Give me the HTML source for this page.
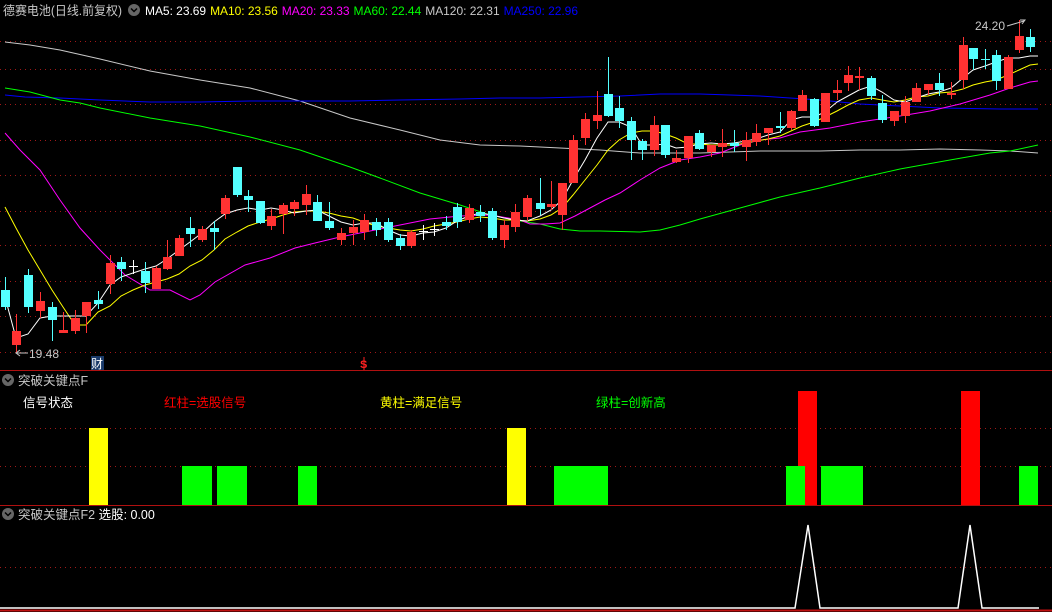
<!DOCTYPE html>
<html><head><meta charset="utf-8"><style>
html,body{margin:0;padding:0;background:#000;width:1052px;height:612px;overflow:hidden}
svg{display:block}
text{font-family:"Liberation Sans","Noto Sans CJK SC",sans-serif}
</style></head><body>
<svg id="s" width="1052" height="612" xmlns="http://www.w3.org/2000/svg">
<g stroke="#a01818" stroke-width="1" stroke-dasharray="1,4">
<line x1="0" y1="41.5" x2="1052" y2="41.5"/><line x1="0" y1="69.5" x2="1052" y2="69.5"/><line x1="0" y1="104.5" x2="1052" y2="104.5"/><line x1="0" y1="140.5" x2="1052" y2="140.5"/><line x1="0" y1="175.5" x2="1052" y2="175.5"/><line x1="0" y1="211.5" x2="1052" y2="211.5"/><line x1="0" y1="245.5" x2="1052" y2="245.5"/><line x1="0" y1="281.5" x2="1052" y2="281.5"/><line x1="0" y1="316.5" x2="1052" y2="316.5"/><line x1="0" y1="352.5" x2="1052" y2="352.5"/>
<line x1="0" y1="428.5" x2="1052" y2="428.5"/><line x1="0" y1="466.5" x2="1052" y2="466.5"/><line x1="0" y1="567.5" x2="1052" y2="567.5"/>
</g>
<line x1="0" y1="370.5" x2="1052" y2="370.5" stroke="#b01010"/>
<line x1="0" y1="505.5" x2="1052" y2="505.5" stroke="#b01010"/>
<line x1="0" y1="610.5" x2="1052" y2="610.5" stroke="#c01010" stroke-width="2"/>
<g id="ma" fill="none" stroke-width="1"></g>
<g id="cd"></g>
<rect x="89" y="428" width="19" height="77" fill="#ffff00"/>
<rect x="507" y="428" width="19" height="77" fill="#ffff00"/>
<g fill="#00ff00">
<rect x="182" y="466" width="30" height="39"/><rect x="217" y="466" width="30" height="39"/><rect x="298" y="466" width="19" height="39"/><rect x="554" y="466" width="54" height="39"/>
</g>
<rect x="798" y="391" width="19" height="114" fill="#ff0000"/>
<rect x="961" y="391" width="19" height="114" fill="#ff0000"/>
<g fill="#00ff00"><rect x="786" y="466" width="19" height="39"/><rect x="821" y="466" width="42" height="39"/><rect x="1019" y="466" width="19" height="39"/></g>
<polyline points="0,608 795,608 808,525 820,608 958,608 970,525 982,608 1039,608" fill="none" stroke="#fff" stroke-width="1.5"/>
<text x="3" y="15" fill="#c8c8c8" font-size="12.5" textLength="119" lengthAdjust="spacingAndGlyphs">德赛电池(日线.前复权)</text>
<circle cx="134" cy="10" r="6" fill="#666"/><path d="M131,8.5 L134,11.5 L137,8.5" stroke="#000" stroke-width="1.5" fill="none"/>
<text x="145" y="15" font-size="12" textLength="433" lengthAdjust="spacing"><tspan fill="#fff">MA5: 23.69</tspan><tspan fill="#ffff00" dx="4">MA10: 23.56</tspan><tspan fill="#ff00ff" dx="4">MA20: 23.33</tspan><tspan fill="#00ff00" dx="4">MA60: 22.44</tspan><tspan fill="#c8c8c8" dx="4">MA120: 22.31</tspan><tspan fill="#0000ff" dx="4">MA250: 22.96</tspan></text>
<text x="975" y="30" fill="#c8c8c8" font-size="12">24.20</text>
<path d="M1007,26 L1024,21 M1020,20 L1025,20 L1022,24" stroke="#c8c8c8" fill="none"/>
<text x="29" y="358" fill="#c8c8c8" font-size="12">19.48</text>
<path d="M16,353 H28 M20,350 L16,353 L20,356" stroke="#c8c8c8" fill="none"/>
<rect x="91" y="356" width="13" height="14" fill="#1a3a6a"/><text x="91" y="368" fill="#fff" font-size="12">财</text>
<text x="360" y="368" fill="#ff2020" font-size="11" font-weight="bold">S</text>
<line x1="364" y1="357" x2="364" y2="370" stroke="#ff2020"/>
<circle cx="8" cy="380" r="6" fill="#666"/><path d="M5,378.5 L8,381.5 L11,378.5" stroke="#000" stroke-width="1.5" fill="none"/>
<text x="18" y="385" fill="#c8c8c8" font-size="12.5">突破关键点F</text>
<text x="23" y="407" fill="#fff" font-size="12.5">信号状态</text>
<text x="164" y="407" fill="#ff0000" font-size="12.5">红柱=选股信号</text>
<text x="380" y="407" fill="#ffff00" font-size="12.5">黄柱=满足信号</text>
<text x="596" y="407" fill="#00ff00" font-size="12.5">绿柱=创新高</text>
<circle cx="8" cy="514" r="6" fill="#666"/><path d="M5,512.5 L8,515.5 L11,512.5" stroke="#000" stroke-width="1.5" fill="none"/>
<text x="18" y="519" fill="#c8c8c8" font-size="12.5">突破关键点F2 <tspan fill="#fff">选股: 0.00</tspan></text>
</svg>
<script>
var NS="http://www.w3.org/2000/svg";
function pl(pts,c){var p=document.createElementNS(NS,"polyline");p.setAttribute("points",pts);p.setAttribute("stroke",c);document.getElementById("ma").appendChild(p);}
pl("5,42 30,45 60,50 100,59 150,71 200,80 250,88 300,101 350,118 400,130 440,140 480,145 520,146 560,148 600,150 640,153 700,153 760,151 820,151 860,150 900,150 940,149 980,150 1010,151 1038,153","#c8c8c8");
pl("5,95 25,97 60,98 100,100 150,102 200,102 250,101 300,101 350,101 400,100 460,99 500,98 540,98 580,97 620,96 660,94 700,94 760,96 820,100 860,104 900,106 940,108 1000,109 1038,109","#0000ff");
pl("5,88 30,92 60,100 80,103 100,108 150,118 200,126 250,137 300,150 350,167 380,178 420,193 460,205 490,215 520,221 540,224 560,229 580,231 600,231 640,232 660,230 680,225 700,219 740,208 780,197 820,188 860,178 900,169 950,160 990,153 1010,151 1038,145","#00ff00");
pl("5,133 20,150 40,170 60,200 80,228 100,250 125,275 150,290 170,290 190,300 200,295 215,282 245,265 270,258 295,248 315,243 340,237 370,231 400,225 430,219 460,216 490,215 520,220 530,224 545,224 560,223 575,216 590,208 605,200 620,193 640,180 660,168 680,160 700,157 720,153 740,145 760,140 780,138 800,132 830,128 860,122 880,119 900,116 930,111 960,104 990,95 1010,88 1030,82 1038,81","#ff00ff");
pl("5,207 16,228 28,250 40,270 52,290 63,307 75,325 86,325 98,312 110,306 121,296 133,290 145,285 156,282 167,279 179,274 190,266 202,260 214,250 225,239 237,232 248,226 260,222 271,219 283,215 294,212 306,211 317,211 329,213 341,216 353,218 364,222 376,226 388,228 400,230 411,231 423,229 434,226 446,224 457,222 469,219 480,217 492,218 504,220 515,220 527,221 540,219 551,215 562,208 573,195 585,180 597,165 608,150 619,140 631,133 642,131 654,131 665,134 676,138 688,144 699,144 711,145 722,145 734,145 746,143 756,141 768,139 780,136 791,131 802,126 814,122 825,117 837,111 848,105 859,100 871,98 882,100 894,102 905,100 916,97 928,96 939,93 951,92 963,89 973,85 985,82 996,80 1008,75 1019,70 1030,65 1038,64","#ffff00");
pl("5,297 16,338 28,334 40,318 52,316 63,316 75,316 86,316 98,303 110,285 121,277 133,273 145,269 156,266 167,259 179,250 190,242 202,233 214,222 225,214 237,210 248,208 260,210 271,208 283,210 294,213 306,211 317,210 329,216 341,222 353,225 364,223 376,223 388,230 400,235 411,236 423,233 434,232 446,228 457,221 469,216 480,213 492,215 504,218 515,220 527,221 540,216 551,210 562,200 573,180 585,160 597,138 608,122 619,122 631,127 642,145 654,145 665,144 676,148 688,147 699,144 711,143 722,144 734,143 746,141 756,139 768,135 780,132 791,120 802,117 814,117 825,112 837,102 848,96 859,90 871,86 882,92 894,100 905,102 916,98 928,94 939,92 951,88 963,78 973,70 985,66 996,62 1008,58 1019,58 1030,56 1038,56","#ffffff");
var C=[["c",5,290,307,277,310],["r",16,331,345,314,352],["c",28,275,307,269,313],["r",40,301,311,292,318],["c",52,307,320,302,341],["r",63,330,333,312,333],["r",75,318,331,310,334],["r",86,302,316,302,333],["c",98,300,304,291,309],["r",110,263,284,255,294],["c",121,262,269,257,281],["w",133,266,267,260,274],["c",145,271,283,262,293],["r",156,268,289,266,289],["r",167,257,269,240,270],["r",179,238,256,235,256],["c",190,228,234,217,247],["r",202,229,240,226,242],["c",214,228,232,221,250],["r",225,198,214,195,219],["c",237,167,195,167,197],["c",248,196,200,190,212],["c",260,201,223,201,224],["r",271,216,226,209,230],["r",283,205,214,203,234],["r",294,202,209,200,216],["r",306,194,205,185,215],["c",317,202,221,195,221],["c",329,221,228,202,230],["r",341,233,240,228,245],["r",353,227,233,220,245],["r",364,220,232,214,240],["c",376,222,230,218,236],["c",388,222,240,218,242],["c",400,238,246,234,250],["r",411,232,246,230,248],["w",423,231,232,225,240],["w",434,229,230,223,236],["c",446,222,226,216,230],["c",457,207,222,203,228],["r",469,208,220,204,223],["c",480,212,216,205,222],["c",492,211,238,208,240],["r",504,225,240,220,248],["r",515,212,227,204,232],["r",527,198,217,195,221],["c",540,203,209,178,215],["r",551,204,207,181,210],["r",562,183,215,183,230],["r",573,140,183,135,183],["r",585,119,138,113,145],["r",597,115,121,91,129],["c",608,94,116,57,117],["c",619,108,121,96,128],["c",631,121,140,117,160],["c",642,141,150,139,160],["r",654,125,150,116,156],["c",665,125,155,125,158],["r",676,158,162,150,163],["r",688,136,158,136,163],["c",699,133,149,130,150],["r",711,145,152,145,157],["r",722,143,147,129,157],["c",734,143,146,130,152],["r",746,140,147,132,161],["r",756,133,142,124,146],["r",768,128,133,128,145],["c",780,126,128,112,133],["r",791,111,128,110,130],["r",802,95,111,90,111],["c",814,99,126,98,127],["r",825,93,122,93,122],["r",837,90,93,80,100],["r",848,75,83,66,91],["r",859,76,78,67,90],["c",871,78,96,76,100],["c",882,103,120,95,123],["r",894,111,121,111,126],["r",905,102,116,96,123],["r",916,88,102,83,102],["r",928,84,90,84,95],["c",939,83,90,73,96],["r",951,93,95,82,99],["r",963,45,80,37,89],["c",973,48,59,48,70],["c",985,59,60,49,69],["c",996,55,81,50,90],["r",1008,57,89,55,89],["r",1019,36,50,20,53],["c",1030,37,47,29,52]];
var g=document.getElementById("cd"),h="";
C.forEach(function(k){var col=k[0]=="r"?"#ff3232":k[0]=="c"?"#54ffff":"#ffffff";var x=k[1];
h+='<line x1="'+(x+.5)+'" y1="'+k[4]+'" x2="'+(x+.5)+'" y2="'+k[5]+'" stroke="'+col+'"/>';
var hh=Math.max(1,k[3]-k[2]);h+='<rect x="'+(x-4)+'" y="'+k[2]+'" width="9" height="'+hh+'" fill="'+col+'"/>';});
g.innerHTML=h;
</script>
</body></html>
